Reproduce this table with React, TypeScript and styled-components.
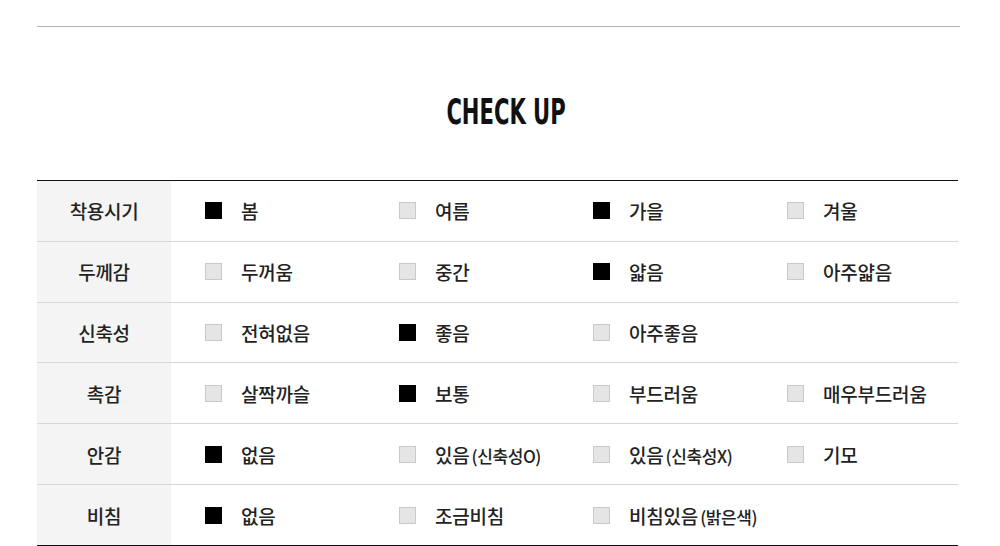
import styled, { createGlobalStyle } from "styled-components";

const GlobalStyle = createGlobalStyle`
  body {
    margin: 0;
    background: #fff;
    font-family: "Noto Sans CJK KR", "Noto Sans", sans-serif;
    color: #222;
  }
`;

const Wrapper = styled.div`
  width: 923px;
  margin-left: 37px;
  padding-top: 26px;
`;

const TopLine = styled.div`
  height: 1px;
  background: #b3b3b3;
`;

const Title = styled.h2`
  margin: 65px 0 48px;
  padding-left: 16px;
  height: 40px;
  text-align: center;
  font-family: "Liberation Sans Narrow", "DejaVu Sans Condensed", sans-serif;
  font-weight: 700;
  font-size: 35px;
  line-height: 40px;
  color: #111;
`;

const TitleText = styled.span`
  display: inline-block;
  transform: scaleX(0.67);
  transform-origin: center;
`;

const Table = styled.div`
  width: 921px;
  border-top: 1px solid #111;
`;

const Row = styled.div<{ $last?: boolean }>`
  display: grid;
  grid-template-columns: 134px repeat(4, 194px) 1fr;
  height: 59.83px;
  border-bottom: 1px solid ${(p) => (p.$last ? "#111" : "#d6d6d6")};
`;

const Label = styled.div`
  background: #f4f4f4;
  display: flex;
  align-items: center;
  justify-content: center;
  font-size: 19px;
  font-weight: 500;
  letter-spacing: -0.3px;
`;

const Option = styled.div`
  display: flex;
  align-items: center;
  padding-left: 34px;
  gap: 19px;
  font-size: 19px;
  font-weight: 500;
  letter-spacing: -0.2px;
  white-space: nowrap;
`;

const Box = styled.span<{ $on?: boolean }>`
  flex: none;
  width: 17px;
  height: 17px;
  box-sizing: border-box;
  background: ${(p) => (p.$on ? "#000" : "#e5e5e5")};
  border: 1px solid ${(p) => (p.$on ? "#000" : "#c9c9c9")};
`;

const Note = styled.span`
  font-size: 17px;
  letter-spacing: -0.4px;
  margin-left: 2px;
`;

type Item = { text: string; note?: string; on?: boolean };

const rows: { label: string; items: Item[] }[] = [
  {
    label: "착용시기",
    items: [
      { text: "봄", on: true },
      { text: "여름" },
      { text: "가을", on: true },
      { text: "겨울" },
    ],
  },
  {
    label: "두께감",
    items: [
      { text: "두꺼움" },
      { text: "중간" },
      { text: "얇음", on: true },
      { text: "아주얇음" },
    ],
  },
  {
    label: "신축성",
    items: [{ text: "전혀없음" }, { text: "좋음", on: true }, { text: "아주좋음" }],
  },
  {
    label: "촉감",
    items: [
      { text: "살짝까슬" },
      { text: "보통", on: true },
      { text: "부드러움" },
      { text: "매우부드러움" },
    ],
  },
  {
    label: "안감",
    items: [
      { text: "없음", on: true },
      { text: "있음", note: "(신축성O)" },
      { text: "있음", note: "(신축성X)" },
      { text: "기모" },
    ],
  },
  {
    label: "비침",
    items: [
      { text: "없음", on: true },
      { text: "조금비침" },
      { text: "비침있음", note: "(밝은색)" },
    ],
  },
];

const App = () => {
  return (
    <Wrapper>
      <GlobalStyle />
      <TopLine />
      <Title>
        <TitleText>CHECK UP</TitleText>
      </Title>
      <Table>
        {rows.map((row, i) => (
          <Row key={row.label} $last={i === rows.length - 1}>
            <Label>{row.label}</Label>
            {row.items.map((item, j) => (
              <Option key={j}>
                <Box $on={item.on} />
                <span>
                  {item.text}
                  {item.note && <Note>{item.note}</Note>}
                </span>
              </Option>
            ))}
          </Row>
        ))}
      </Table>
    </Wrapper>
  );
};

export default App;
